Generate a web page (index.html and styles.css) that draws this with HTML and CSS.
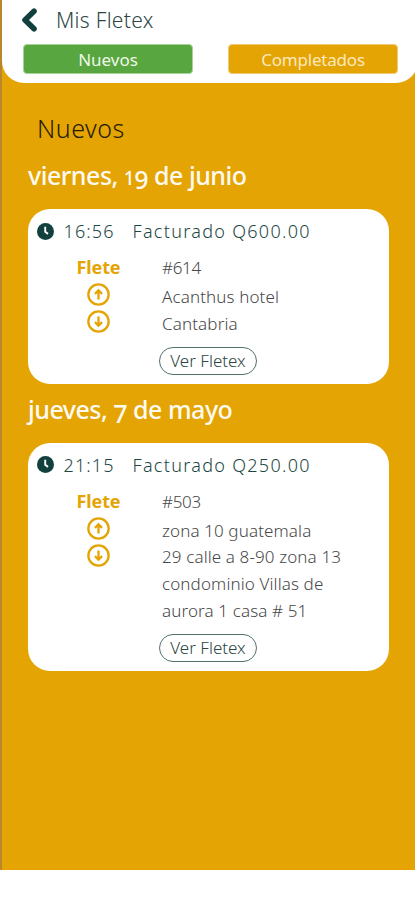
FILE: index.html
```html
<!DOCTYPE html>
<html lang="es">
<head>
    <meta charset="UTF-8">
    <meta name="viewport" content="width=device-width, initial-scale=1.0">
    <title>Mis Fletex</title>
    <link rel="stylesheet" href="styles.css">
</head>
<body>
    <div class="app">
        <div class="header">
            <div class="title-bar">
                <svg class="back" viewBox="0 0 16 24"><path d="M13 3.3L4 12l9 8.7"/></svg>
                <h1>Mis Fletex</h1>
            </div>
            <div class="tabs">
                <button class="tab active">Nuevos</button>
                <button class="tab done">Completados</button>
            </div>
        </div>

        <h2>Nuevos</h2>

        <h3 class="day">viernes, <span class="one">1</span><span class="low">9</span> de junio</h3>
        <div class="card">
            <div class="card-top">
                <svg class="clock" viewBox="0 0 18 18"><circle cx="9" cy="9" r="9"/><path d="M8.7 4v5.4l3 2.1"/></svg>
                <span class="time">16:56</span>
                <span class="bill">Facturado Q600.00</span>
            </div>
            <div class="card-body">
                <div class="labels">
                    <b>Flete</b>
                    <svg class="arrow" viewBox="0 0 24 24"><circle cx="12" cy="12" r="10.6"/><path d="M12 17.2V8M8.3 11.3L12 7.6l3.7 3.7"/></svg>
                    <svg class="arrow" viewBox="0 0 24 24"><circle cx="12" cy="12" r="10.6"/><path d="M12 6.8V16M8.3 12.7l3.7 3.7 3.7-3.7"/></svg>
                </div>
                <div class="info">
                    <div class="number">#614</div>
                    <div class="place">Acanthus hotel</div>
                    <div class="place">Cantabria</div>
                    <button class="view">Ver Fletex</button>
                </div>
            </div>
        </div>

        <h3 class="day second">jueves, <span class="low">7</span> de mayo</h3>
        <div class="card">
            <div class="card-top">
                <svg class="clock" viewBox="0 0 18 18"><circle cx="9" cy="9" r="9"/><path d="M8.7 4v5.4l3 2.1"/></svg>
                <span class="time">21:15</span>
                <span class="bill">Facturado Q250.00</span>
            </div>
            <div class="card-body">
                <div class="labels">
                    <b>Flete</b>
                    <svg class="arrow" viewBox="0 0 24 24"><circle cx="12" cy="12" r="10.6"/><path d="M12 17.2V8M8.3 11.3L12 7.6l3.7 3.7"/></svg>
                    <svg class="arrow" viewBox="0 0 24 24"><circle cx="12" cy="12" r="10.6"/><path d="M12 6.8V16M8.3 12.7l3.7 3.7 3.7-3.7"/></svg>
                </div>
                <div class="info">
                    <div class="number">#503</div>
                    <div class="place">zona 10 guatemala</div>
                    <div class="place">29 calle a 8-90 zona 13<br>condominio Villas de<br>aurora 1 casa # 51</div>
                    <button class="view">Ver Fletex</button>
                </div>
            </div>
        </div>
    </div>
</body>
</html>
```
FILE: styles.css
```css
* {
    box-sizing: border-box;
}
body {
    margin: 0;
    background-color: white;
    font-family: "Noto Sans", "Open Sans", sans-serif;
    overflow: hidden;
}
.app {
    width: 418px;
    height: 870px;
    background-color: #e4a404;
    border-left: 2px solid #b8862b;
}
.header {
    height: 83px;
    background-color: white;
    border-radius: 0 0 22px 22px;
}
.title-bar {
    display: flex;
    align-items: center;
    height: 44px;
    padding: 0 0 4px 19px;
}
.back {
    width: 16px;
    height: 24px;
    fill: none;
    stroke: #12403c;
    stroke-width: 5.6;
    stroke-linecap: round;
    stroke-linejoin: round;
}
h1 {
    margin: 0 0 0 19px;
    font-size: 21px;
    font-weight: 300;
    letter-spacing: 0.3px;
    color: #2c4644;
}
.tabs {
    display: flex;
    gap: 35px;
    padding-left: 21px;
}
.tab {
    width: 170px;
    height: 30px;
    padding: 0;
    border: 1px solid #a5d295;
    border-radius: 4px;
    font-family: inherit;
    font-size: 17px;
    color: #f0f8e8;
}
.active {
    background-color: #57a63f;
}
.done {
    background-color: #e4a404;
    border-color: #f0cb74;
    color: #fbe8bd;
    letter-spacing: -0.2px;
}
h2 {
    margin: 29px 0 0 35px;
    font-size: 25px;
    line-height: 32px;
    font-weight: 300;
    letter-spacing: 0.5px;
    color: #261c00;
}
.day {
    margin: 15px 0 0 26px;
    height: 32px;
    font-size: 25px;
    line-height: 32px;
    font-weight: 500;
    letter-spacing: -0.5px;
    color: #fffaf0;
}
.day.second {
    margin-top: 9px;
}
/* old-style figures: 1 at x-height, 7 and 9 below the baseline */
.low {
    position: relative;
    top: 4px;
}
.one {
    font-size: 19px;
}
.card {
    width: 361px;
    margin: 18px 0 0 25.5px;
    padding: 8px 0 9px;
    background-color: white;
    border-radius: 22px;
}
.card-top {
    display: flex;
    align-items: center;
    height: 28px;
    padding-left: 9px;
    color: #1d4743;
    font-size: 18px;
    font-weight: 300;
    letter-spacing: 1.3px;
}
.clock {
    width: 17px;
    height: 17px;
    fill: #12403c;
}
.clock path {
    fill: none;
    stroke: white;
    stroke-width: 2;
}
.time {
    width: 69px;
    margin-left: 10px;
    letter-spacing: 1.1px;
}
.card-body {
    display: flex;
}
.labels {
    display: flex;
    flex-direction: column;
    align-items: center;
    width: 142px;
    padding-top: 9px;
    color: #e4a404;
}
.labels b {
    margin-bottom: 2px;
    font-size: 18px;
    line-height: 27px;
    letter-spacing: -0.1px;
}
.arrow {
    width: 23px;
    height: 23px;
    margin-bottom: 4px;
    fill: none;
    stroke: #e4a404;
    stroke-width: 2.4;
}
.info {
    margin-left: -7.5px;
    padding-top: 10px;
    font-size: 17px;
    font-weight: 300;
    line-height: 26.8px;
    letter-spacing: 0.12px;
    color: #484848;
}
.number {
    height: 29px;
    letter-spacing: -0.3px;
}
.view {
    display: block;
    width: 98px;
    height: 28px;
    margin: 9px 0 0 -3px;
    padding: 0;
    border: 1px solid #52716d;
    border-radius: 14px;
    background-color: white;
    font-family: inherit;
    font-size: 17px;
    font-weight: 300;
    color: #2c4644;
}
```
